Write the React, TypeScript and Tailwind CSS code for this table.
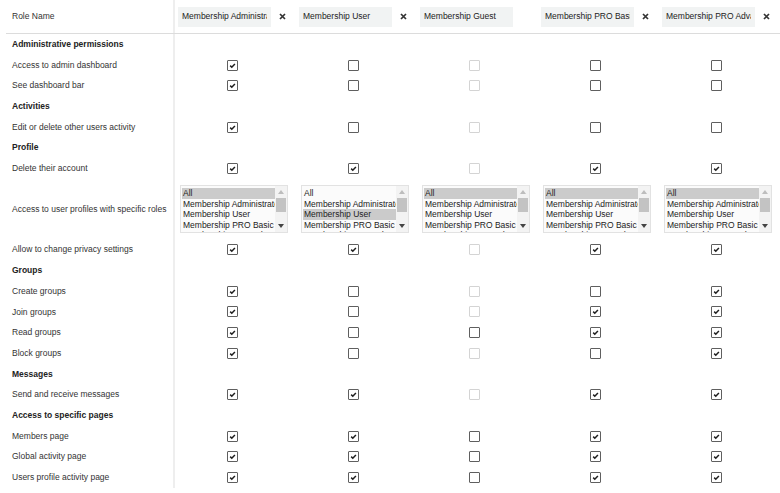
import React from "react";

type Row =
  | { kind: "section"; label: string }
  | { kind: "check"; label: string; v: string }
  | { kind: "list"; label: string; sel: number[] };

const roles = [
  { name: "Membership Administrator", removable: true },
  { name: "Membership User", removable: true },
  { name: "Membership Guest", removable: false },
  { name: "Membership PRO Basic", removable: true },
  { name: "Membership PRO Advanced", removable: true },
];

const options = [
  "All",
  "Membership Administrator",
  "Membership User",
  "Membership PRO Basic",
  "Membership PRO Advanced",
  "Membership Guest",
];

// 1 = checked, 0 = unchecked, d = disabled
const rows: Row[] = [
  { kind: "section", label: "Administrative permissions" },
  { kind: "check", label: "Access to admin dashboard", v: "10d00" },
  { kind: "check", label: "See dashboard bar", v: "10d00" },
  { kind: "section", label: "Activities" },
  { kind: "check", label: "Edit or delete other users activity", v: "10d00" },
  { kind: "section", label: "Profile" },
  { kind: "check", label: "Delete their account", v: "11d11" },
  { kind: "list", label: "Access to user profiles with specific roles", sel: [0, 2, 0, 0, 0] },
  { kind: "check", label: "Allow to change privacy settings", v: "11d11" },
  { kind: "section", label: "Groups" },
  { kind: "check", label: "Create groups", v: "10d01" },
  { kind: "check", label: "Join groups", v: "10d11" },
  { kind: "check", label: "Read groups", v: "10011" },
  { kind: "check", label: "Block groups", v: "10d01" },
  { kind: "section", label: "Messages" },
  { kind: "check", label: "Send and receive messages", v: "11d11" },
  { kind: "section", label: "Access to specific pages" },
  { kind: "check", label: "Members page", v: "11011" },
  { kind: "check", label: "Global activity page", v: "11011" },
  { kind: "check", label: "Users profile activity page", v: "11011" },
];

function Checkbox({ state }: { state: string }) {
  const disabled = state === "d";
  return (
    <span
      className={`w-[11px] h-[11px] flex items-center justify-center bg-white border rounded-[1px] ${
        disabled ? "border-[#d4d4d4]" : "border-[#5f5f5f]"
      }`}
    >
      {state === "1" && (
        <svg width="9" height="9" viewBox="0 0 9 9">
          <path d="M2.2 4.6 L3.8 6.2 L6.9 3" stroke="#1f1f1f" strokeWidth="1.5" fill="none" />
        </svg>
      )}
    </span>
  );
}

function RemoveIcon() {
  return (
    <svg width="7" height="7" viewBox="0 0 7 7" className="shrink-0">
      <path d="M1 1 L6 6 M6 1 L1 6" stroke="#333" strokeWidth="1.7" />
    </svg>
  );
}

function ListBox({ selected }: { selected: number }) {
  return (
    <div className="ml-[5px] w-[108px] h-[48px] flex border border-[#e2e2e2] bg-[#fbfbfb] overflow-hidden">
      <div className="flex-1 overflow-hidden pt-[2px] pl-[1px]">
        {options.map((o, i) => (
          <div
            key={o}
            className={`h-[10.5px] leading-[10.5px] pl-[1px] whitespace-nowrap overflow-hidden text-[8.5px] text-[#222] ${
              i === selected ? "bg-[#cbcbcb]" : ""
            }`}
          >
            {o}
          </div>
        ))}
      </div>
      <div className="w-[12px] flex flex-col items-center bg-[#f3f3f3]">
        <div className="h-[12px] flex items-center justify-center">
          <svg width="6" height="4" viewBox="0 0 6 4">
            <path d="M0 4 L3 0 L6 4 Z" fill="#bdbdbd" />
          </svg>
        </div>
        <div className="w-[10px] h-[14px] bg-[#c3c3c3]" />
        <div className="flex-1" />
        <div className="h-[12px] flex items-center justify-center">
          <svg width="6" height="4" viewBox="0 0 6 4">
            <path d="M0 0 L3 4 L6 0 Z" fill="#444" />
          </svg>
        </div>
      </div>
    </div>
  );
}

export default function App() {
  return (
    <div className="w-[780px] h-[493px] overflow-hidden bg-white font-['Liberation_Sans',Arial,sans-serif] text-[8.5px] text-[#333]">
      {/* Header */}
      <div className="ml-[6px] h-[34px] flex border-b border-[#dcdcdc] w-[780px]">
        <div className="w-[169px] shrink-0 border-r-2 border-[#eeeeee] pl-[6px] flex items-center">
          Role Name
        </div>
        {roles.map((r) => (
          <div key={r.name} className="w-[121px] shrink-0 pl-[3px] flex items-center gap-[8px]">
            <div className="w-[93px] h-[20px] bg-[#f1f3f3] px-[4px] flex items-center">
              <span className="block w-full overflow-hidden whitespace-nowrap text-[#222]">{r.name}</span>
            </div>
            {r.removable && <RemoveIcon />}
          </div>
        ))}
      </div>

      {/* Rows */}
      {rows.map((row, idx) => (
        <div
          key={idx}
          className={`ml-[6px] flex ${row.kind === "list" ? "h-[60.7px]" : "h-[20.7px]"}`}
        >
          <div
            className={`w-[169px] shrink-0 border-r-2 border-[#eeeeee] pl-[6px] flex items-center whitespace-nowrap ${
              row.kind === "section" ? "font-bold text-[#222]" : ""
            }`}
          >
            {row.label}
          </div>
          {row.kind === "check" &&
            row.v.split("").map((s, i) => (
              <div key={i} className="w-[121px] shrink-0 flex items-center">
                <div className="w-[114px] flex justify-center">
                  <Checkbox state={s} />
                </div>
              </div>
            ))}
          {row.kind === "list" &&
            row.sel.map((s, i) => (
              <div key={i} className="w-[121px] shrink-0 flex items-center">
                <ListBox selected={s} />
              </div>
            ))}
        </div>
      ))}
    </div>
  );
}
